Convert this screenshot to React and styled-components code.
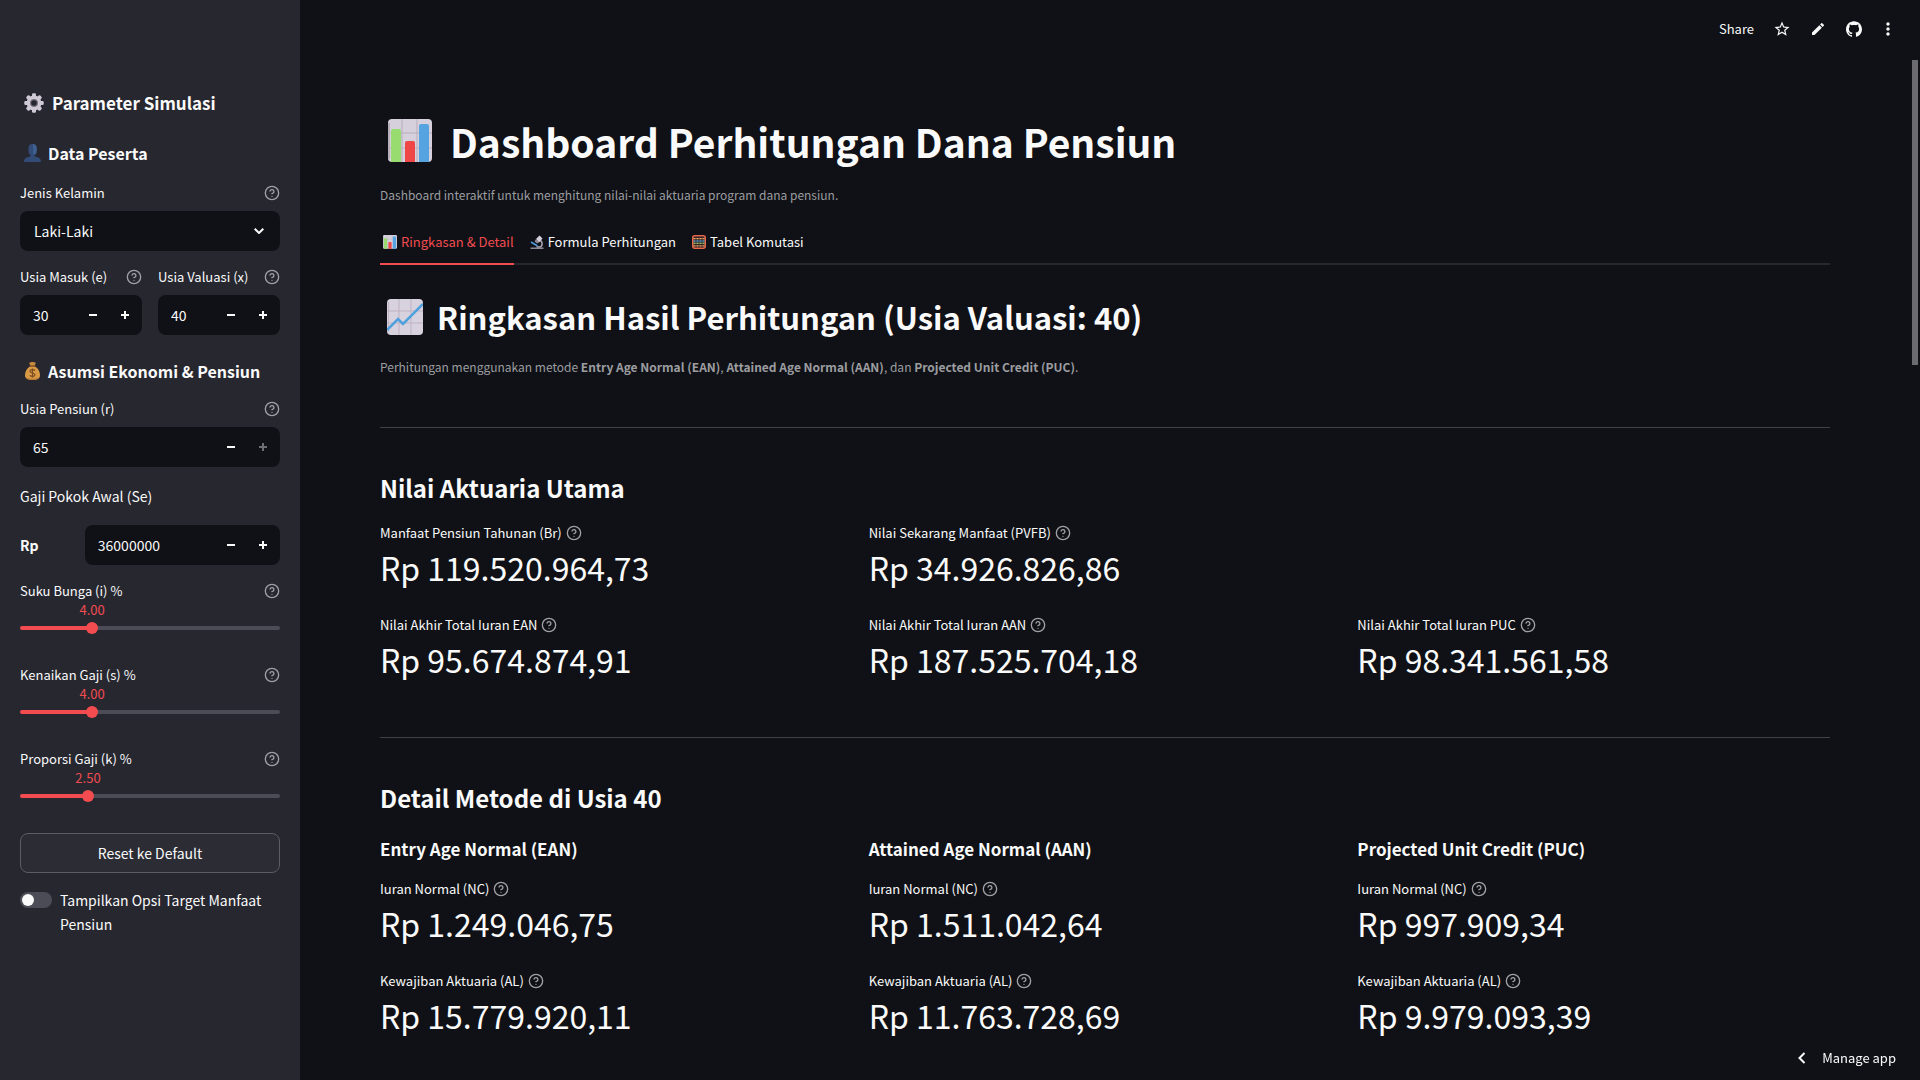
import React, { useState } from 'react';
import styled, { createGlobalStyle } from 'styled-components'
import { MdStarBorder, MdEdit, MdMoreVert } from 'react-icons/md'
import { SiGithub } from 'react-icons/si'

const GlobalStyle = createGlobalStyle`
  * {
    box-sizing: border-box;
  }
  body {
    margin: 0;
    background: #0f1116;
    color: #fafafa;
    font-family: "Noto Sans CJK SC", "Source Sans Pro", sans-serif;
    font-size: 14px;
    line-height: 24px;
  }
  button, input, select {
    font: inherit;
    color: inherit;
  }
  h1, h2, h3, h4, p, dl, dd {
    margin: 0;
  }
`

// ============== Layout
const Page = styled.div`
  display: flex;
  min-height: 100vh;
`
const Sidebar = styled.aside`
  width: 300px;
  flex-shrink: 0;
  padding: 89px 20px 40px;
  background: #272730;
`
const Main = styled.main`
  position: relative;
  flex: 1;
  min-width: 0;
`
const Content = styled.div`
  padding: 55px 90px 20px 80px;
`
const ScrollThumb = styled.div`
  position: absolute;
  top: 60px;
  right: 2px;
  width: 6px;
  height: 305px;
  background: #6c6c70;
`

// ============== Toolbar
const Toolbar = styled.header`
  display: flex;
  justify-content: flex-end;
  align-items: center;
  height: 60px;
  padding: 0 16px 2px 0;
`
const ToolButton = styled.button`
  display: flex;
  align-items: center;
  justify-content: center;
  min-width: ${props => (props.$narrow ? '32px' : '36px')};
  height: 28px;
  padding: 0 ${props => (props.$text ? '10px' : '0')};
  border: none;
  background: none;
  font-size: 13px;
  cursor: pointer;
`

// ============== Headings
const PageTitle = styled.h1`
  display: flex;
  align-items: center;
  gap: 18px;
  padding-left: 8px;
  font-size: 39px;
  font-weight: 700;
  line-height: 52px;
`
const TabTitle = styled.h2`
  display: flex;
  align-items: center;
  gap: 14px;
  margin-top: 30px;
  padding-left: 7px;
  font-size: 31px;
  font-weight: 600;
  line-height: 44px;
`
const SectionTitle = styled.h3`
  font-size: 24px;
  font-weight: 600;
  line-height: 34px;
`
const MethodTitle = styled.h4`
  margin-bottom: 18px;
  font-size: 17px;
  font-weight: 600;
  line-height: 24px;
`
const Caption = styled.p`
  margin-top: 18px;
  color: #9c9da0;
  font-size: 12px;
  line-height: 20px;
`
const SideTitle = styled.h2`
  display: flex;
  align-items: center;
  gap: 8px;
  padding-left: 4px;
  font-size: 17px;
  font-weight: 600;
  line-height: 28px;
`
const SideSubtitle = styled.h3`
  display: flex;
  align-items: center;
  gap: 7px;
  margin-top: 22px;
  padding-left: 4px;
  font-size: 16px;
  font-weight: 600;
  line-height: 28px;
`

// ============== Tabs
const TabList = styled.div`
  display: flex;
  gap: 13px;
  margin-top: 18px;
  border-bottom: 2px solid #272730;
`
const Tab = styled.button`
  display: flex;
  align-items: center;
  gap: 4px;
  margin-bottom: -2px;
  padding: 9px 0 11px 3px;
  border: none;
  border-bottom: 2px solid ${props => (props.$active ? '#f24c50' : 'transparent')};
  background: none;
  color: ${props => (props.$active ? '#f24c50' : '#fafafa')};
  font-size: 13px;
  line-height: 20px;
  cursor: pointer;
`

// ============== Metrics
const Divider = styled.hr`
  height: 1px;
  margin: 50px 0 43px;
  border: none;
  background: #404146;
`
const MetricGrid = styled.dl`
  display: grid;
  grid-template-columns: repeat(3, 1fr);
  gap: 16px;
  margin-top: ${props => (props.$first ? '18px' : '20px')};
`
const MethodGrid = styled.div`
  display: grid;
  grid-template-columns: repeat(3, 1fr);
  gap: 16px;
  margin-top: 22px;
`
const MetricList = styled.dl`
  display: flex;
  flex-direction: column;
  gap: 20px;
`
const MetricLabel = styled.dt`
  display: flex;
  align-items: center;
  gap: 4px;
  font-size: 13px;
  line-height: 20px;
`
const MetricValue = styled.dd`
  padding-bottom: 4px;
  font-size: 32px;
  line-height: 48px;
`

// ============== Form
const Field = styled.div`
  margin-top: ${props => props.$space || '16px'};
`
const FieldHead = styled.div`
  display: flex;
  align-items: center;
  justify-content: space-between;
  height: 20px;
  margin-bottom: ${props => (props.$tight ? '0' : '8px')};
  font-size: 13px;
  line-height: 20px;
`
const FieldPair = styled.div`
  display: grid;
  grid-template-columns: repeat(2, minmax(0, 1fr));
  gap: 16px;
`
const SelectBox = styled.div`
  display: grid;
  align-items: center;
  height: 40px;
  border-radius: 8px;
  background: #0f1116;

  & > * {
    grid-area: 1 / 1;
  }
  svg {
    justify-self: end;
    margin-right: 16px;
    pointer-events: none;
  }
`
const Select = styled.select`
  width: 100%;
  height: 40px;
  padding: 0 14px;
  border: none;
  border-radius: 8px;
  appearance: none;
  background: transparent;

  option {
    background: #0f1116;
  }
`
const NumberBox = styled.div`
  display: flex;
  height: 40px;
  padding-right: 1px;
  border-radius: 8px;
  background: #0f1116;
`
const NumberInput = styled.input`
  flex: 1;
  min-width: 0;
  padding: 0 0 0 13px;
  border: none;
  background: none;
  appearance: textfield;

  &::-webkit-inner-spin-button {
    appearance: none;
  }
`
const StepButton = styled.button`
  display: flex;
  align-items: center;
  justify-content: center;
  flex-shrink: 0;
  width: 32px;
  padding: 0;
  border: none;
  background: none;
  cursor: pointer;

  &:disabled {
    opacity: 0.4;
    cursor: default;
  }
`
const SalaryLabel = styled.label`
  display: block;
  margin-top: 17px;
`
const SalaryRow = styled.div`
  display: grid;
  grid-template-columns: minmax(0, 1fr) minmax(0, 4fr);
  align-items: center;
  gap: 16px;
  margin-top: 17px;
`
const SliderField = styled.div`
  height: 84px;
`
const SliderValue = styled.div`
  display: flex;
  height: 18px;
  color: #f24c50;
  font-size: 13px;
  line-height: 18px;

  output {
    transform: translateX(-50%);
  }
`
const Range = styled.input`
  display: block;
  width: 100%;
  height: 18px;
  margin: 0;
  appearance: none;
  background: none;

  &::-webkit-slider-runnable-track {
    height: 4px;
    border-radius: 4px;
    background: linear-gradient(to right, #f24c50 var(--filled), #4c4c56 var(--filled));
  }
  &::-webkit-slider-thumb {
    appearance: none;
    width: 12px;
    height: 12px;
    margin-top: -4px;
    border-radius: 50%;
    background: #f24c50;
  }
`
const ResetButton = styled.button`
  display: block;
  width: 100%;
  height: 40px;
  border: 1px solid #5c5c63;
  border-radius: 8px;
  background: #2c2c35;
  cursor: pointer;
`
const ToggleLabel = styled.label`
  display: flex;
  gap: 8px;
  margin-top: 15px;
`
const Toggle = styled.input`
  flex-shrink: 0;
  display: flex;
  align-items: center;
  width: 32px;
  height: 16px;
  margin: 4px 0;
  padding: 2px;
  border-radius: 8px;
  appearance: none;
  background: #4c4c56;

  &::before {
    content: "";
    width: 12px;
    height: 12px;
    border-radius: 50%;
    background: #fafafa;
  }
  &:checked {
    justify-content: flex-end;
    background: #f24c50;
  }
`

// ============== Manage app
const ManageApp = styled.button`
  position: fixed;
  right: 24px;
  bottom: 10px;
  display: flex;
  align-items: center;
  gap: 16px;
  padding: 0;
  border: none;
  background: none;
  font-size: 13px;
  cursor: pointer;
`

// ============== Icons
const HelpButton = styled.button`
  display: flex;
  padding: 0;
  border: none;
  background: none;
  color: #a0a0a6;
  cursor: help;
`
const Glyph = styled.svg`
  display: block;
  flex-shrink: 0;
`

function Help({ about }) {
  return (
    <HelpButton type="button" aria-label={about}>
      <Glyph width="16" height="16" viewBox="0 0 24 24" fill="none" stroke="currentColor" strokeWidth="2" strokeLinecap="round" strokeLinejoin="round">
        <circle cx="12" cy="12" r="10" />
        <path d="M9.09 9a3 3 0 0 1 5.83 1c0 2-3 3-3 3M12 17h.01" />
      </Glyph>
    </HelpButton>
  )
}

function BarChartIcon({ size }) {
  return (
    <Glyph width={size} height={size} viewBox="0 0 44 44">
      <rect width="44" height="43" rx="4" fill="#d6cfdc" />
      <path d="M0 14h44M0 29h44M14 0v43M29 0v43" stroke="#b9adbd" strokeWidth="1" />
      <path d="M1 4v36" stroke="#b9b0be" strokeWidth="2" />
      <path d="M3 43V12a2 2 0 0 1 2-2h6a2 2 0 0 1 2 2v31z" fill="#98dc70" />
      <path d="M17 43V24a2 2 0 0 1 2-2h6a2 2 0 0 1 2 2v19z" fill="#ef4748" />
      <path d="M31 43V7a2 2 0 0 1 2-2h6a2 2 0 0 1 2 2v36z" fill="#55a3e0" />
    </Glyph>
  )
}

function LineChartIcon() {
  return (
    <Glyph width="36" height="36" viewBox="0 0 36 36">
      <rect width="36" height="36" rx="4" fill="#d8d2df" />
      <path d="M0 12h36M0 24h36M12 0v36M24 0v36M1.500 3v30" stroke="#bfb2c3" strokeWidth="1" />
      <path d="M0 31L11 20l5 5L36 5" fill="none" stroke="#4ea1dd" strokeWidth="2.500" />
    </Glyph>
  )
}

function MicroscopeIcon() {
  return (
    <Glyph width="14" height="14" viewBox="0 0 28 28">
      <path d="M19 10c7 3 7 12 0 15" fill="none" stroke="#aaa4b2" strokeWidth="3" />
      <path d="M12 8l7-7 6 6-7 8z" fill="#d5d0dc" />
      <path d="M12 8l-3 5 5 4 4-2z" fill="#8d8796" />
      <path d="M2 14l13 8" stroke="#4c9cdf" strokeWidth="3" />
      <path d="M1 25h26v3H1zM13 22h8v3h-8z" fill="#8d8796" />
    </Glyph>
  )
}

function AbacusIcon() {
  return (
    <Glyph width="14" height="14" viewBox="0 0 28 28">
      <rect x="1.500" y="1.500" width="25" height="25" rx="4" fill="#33242a" stroke="#e8684a" strokeWidth="3" />
      <path d="M3 7h22M3 21.500h22" stroke="#f0a85c" strokeWidth="2.500" />
      <path d="M3 12h22" stroke="#58a8df" strokeWidth="2.500" />
      <path d="M3 16.500h22" stroke="#98d070" strokeWidth="2.500" />
      <path d="M8 3v22M14 3v22M20 3v22" stroke="#33242a" strokeWidth="1.500" />
    </Glyph>
  )
}

function GearIcon() {
  return (
    <Glyph width="20" height="20" viewBox="0 0 20 20">
      <g fill="#cfc9d6">
        {[0, 45, 90, 135].map(angle => (
          <rect key={angle} x="8" y="0.300" width="4" height="19.400" rx="1.200" transform={`rotate(${angle} 10 10)`} />
        ))}
        <circle cx="10" cy="10" r="7.400" />
      </g>
      <circle cx="10" cy="10" r="4" fill="#77707f" />
      <circle cx="10" cy="10" r="2.800" fill="#272730" />
    </Glyph>
  )
}

function PersonIcon() {
  return (
    <Glyph width="17" height="18" viewBox="0 0 17 18">
      <path d="M4.500 4c0-2.600 1.500-4 4-4s4.200 1.400 4.200 4v3c0 2-1.200 3.600-2.400 4.200v1l4 1.300c1.700.6 2.700 2.200 2.700 4.500H0c0-2.300 1-3.900 2.700-4.500l3.800-1.300v-1C5.300 10.600 4.500 9 4.500 7z" fill="#324c77" />
      <path d="M9 0c2.500.2 3.700 1.600 3.700 4v3c0 2-1.200 3.600-2.400 4.200L9 9z" fill="#3e6090" />
    </Glyph>
  )
}

function MoneyBagIcon() {
  return (
    <Glyph width="17" height="18" viewBox="0 0 17 18">
      <path d="M5 .5c1 .6 1.600-.5 3.500-.5s2.500 1 3.500.5L10.500 4h-4z" fill="#c88a3c" />
      <path d="M6 4.500h5c3 1.800 5 5 5 8.500s-2 5-7.500 5S1 16.500 1 13s2-6.700 5-8.500z" fill="#d99a45" />
      <path d="M2 15c2 2 11 2 13 0-.8 2-3 3-6.500 3S2.800 17 2 15z" fill="#b87932" />
      <rect x="5.500" y="3.300" width="6" height="1.500" rx=".7" fill="#8f5b2a" />
      <path d="M11 8.500C9.500 7 6 7.300 6 9.300s5 1.400 5 3.400-3.800 2.300-5.200.7M8.500 6.500v9" fill="none" stroke="#7a4a22" strokeWidth="1.200" />
    </Glyph>
  )
}

function StepIcon({ plus }) {
  return (
    <Glyph width="8" height="8" viewBox="0 0 8 8" fill="currentColor">
      <path d={plus ? 'M3 0h2v3h3v2H5v3H3V5H0V3h3z' : 'M0 3h8v2H0z'} />
    </Glyph>
  )
}

// ============== Components
function NumberField({ id, value, atMax }) {
  const [current, setCurrent] = useState(value)
  return (
    <NumberBox>
      <NumberInput id={id} type="number" value={current} onChange={e => setCurrent(Number(e.target.value))} />
      <StepButton type="button" aria-label="Kurangi" onClick={() => setCurrent(current - 1)}><StepIcon /></StepButton>
      <StepButton type="button" aria-label="Tambah" disabled={atMax} onClick={() => setCurrent(current + 1)}><StepIcon plus /></StepButton>
    </NumberBox>
  )
}

function Slider({ id, label, start, max }) {
  const [value, setValue] = useState(start)
  const ratio = value / max
  const center = `calc(6px + (100% - 12px) * ${ratio})`
  return (
    <SliderField>
      <FieldHead $tight>
        <label htmlFor={id}>{label}</label>
        <Help about={label} />
      </FieldHead>
      <SliderValue style={{ paddingLeft: center }}>
        <output htmlFor={id}>{value.toFixed(2)}</output>
      </SliderValue>
      <Range id={id} type="range" min="0" max={max} step="0.01" value={value}
        style={{ '--filled': center }}
        onChange={e => setValue(Number(e.target.value))} />
    </SliderField>
  )
}

function Metric({ label, value }) {
  return (
    <div>
      <MetricLabel>{label}<Help about={label} /></MetricLabel>
      <MetricValue>{value}</MetricValue>
    </div>
  )
}

const iuran = [
  ['Nilai Akhir Total Iuran EAN', 'Rp 95.674.874,91'],
  ['Nilai Akhir Total Iuran AAN', 'Rp 187.525.704,18'],
  ['Nilai Akhir Total Iuran PUC', 'Rp 98.341.561,58'],
]

const metode = [
  { nama: 'Entry Age Normal (EAN)', nc: 'Rp 1.249.046,75', al: 'Rp 15.779.920,11' },
  { nama: 'Attained Age Normal (AAN)', nc: 'Rp 1.511.042,64', al: 'Rp 11.763.728,69' },
  { nama: 'Projected Unit Credit (PUC)', nc: 'Rp 997.909,34', al: 'Rp 9.979.093,39' },
]

function Parameters() {
  return (
    <Sidebar>
      <SideTitle><GearIcon />Parameter Simulasi</SideTitle>
      <SideSubtitle><PersonIcon />Data Peserta</SideSubtitle>

      <Field>
        <FieldHead>
          <label htmlFor="kelamin">Jenis Kelamin</label>
          <Help about="Jenis Kelamin" />
        </FieldHead>
        <SelectBox>
          <Select id="kelamin" defaultValue="Laki-Laki">
            <option>Laki-Laki</option>
            <option>Perempuan</option>
          </Select>
          <Glyph width="10" height="6" viewBox="0 0 10 6" fill="none" stroke="#fafafa" strokeWidth="2">
            <path d="M.7.7L5 5 9.300.7" />
          </Glyph>
        </SelectBox>
      </Field>

      <FieldPair>
        <Field>
          <FieldHead>
            <label htmlFor="masuk">Usia Masuk (e)</label>
            <Help about="Usia Masuk" />
          </FieldHead>
          <NumberField id="masuk" value={30} />
        </Field>
        <Field>
          <FieldHead>
            <label htmlFor="valuasi">Usia Valuasi (x)</label>
            <Help about="Usia Valuasi" />
          </FieldHead>
          <NumberField id="valuasi" value={40} />
        </Field>
      </FieldPair>

      <SideSubtitle><MoneyBagIcon />Asumsi Ekonomi &amp; Pensiun</SideSubtitle>
      <Field $space="14px">
        <FieldHead>
          <label htmlFor="pensiun">Usia Pensiun (r)</label>
          <Help about="Usia Pensiun" />
        </FieldHead>
        <NumberField id="pensiun" value={65} atMax />
      </Field>

      <SalaryLabel htmlFor="gaji">Gaji Pokok Awal (Se)</SalaryLabel>
      <SalaryRow>
        <strong>Rp</strong>
        <NumberField id="gaji" value={36000000} />
      </SalaryRow>

      <Field>
        <Slider id="bunga" label="Suku Bunga (i) %" start={4} max={15} />
        <Slider id="kenaikan" label="Kenaikan Gaji (s) %" start={4} max={15} />
        <Slider id="proporsi" label="Proporsi Gaji (k) %" start={2.5} max={10} />
      </Field>

      <ResetButton type="button">Reset ke Default</ResetButton>
      <ToggleLabel>
        <Toggle type="checkbox" role="switch" />
        Tampilkan Opsi Target Manfaat Pensiun
      </ToggleLabel>
    </Sidebar>
  )
}

function App() {
  return (
    <Page>
      <GlobalStyle />
      <Parameters />
      <Main>
        <Toolbar>
          <ToolButton $text>Share</ToolButton>
          <ToolButton aria-label="Favorit"><MdStarBorder size={18} /></ToolButton>
          <ToolButton aria-label="Edit"><MdEdit size={16} /></ToolButton>
          <ToolButton aria-label="GitHub"><SiGithub size={16} /></ToolButton>
          <ToolButton $narrow aria-label="Menu"><MdMoreVert size={20} /></ToolButton>
        </Toolbar>

        <Content>
          <PageTitle><BarChartIcon size={44} />Dashboard Perhitungan Dana Pensiun</PageTitle>
          <Caption>Dashboard interaktif untuk menghitung nilai-nilai aktuaria program dana pensiun.</Caption>

          <TabList role="tablist">
            <Tab role="tab" aria-selected="true" $active><BarChartIcon size={14} />Ringkasan &amp; Detail</Tab>
            <Tab role="tab" aria-selected="false"><MicroscopeIcon />Formula Perhitungan</Tab>
            <Tab role="tab" aria-selected="false"><AbacusIcon />Tabel Komutasi</Tab>
          </TabList>

          <TabTitle><LineChartIcon />Ringkasan Hasil Perhitungan (Usia Valuasi: 40)</TabTitle>
          <Caption>
            Perhitungan menggunakan metode <strong>Entry Age Normal (EAN)</strong>, <strong>Attained Age Normal (AAN)</strong>, dan <strong>Projected Unit Credit (PUC)</strong>.
          </Caption>

          <Divider />

          <SectionTitle>Nilai Aktuaria Utama</SectionTitle>
          <MetricGrid $first>
            <Metric label="Manfaat Pensiun Tahunan (Br)" value="Rp 119.520.964,73" />
            <Metric label="Nilai Sekarang Manfaat (PVFB)" value="Rp 34.926.826,86" />
          </MetricGrid>
          <MetricGrid>
            {iuran.map(([label, value]) => <Metric key={label} label={label} value={value} />)}
          </MetricGrid>

          <Divider />

          <SectionTitle>Detail Metode di Usia 40</SectionTitle>
          <MethodGrid>
            {metode.map(m => (
              <section key={m.nama}>
                <MethodTitle>{m.nama}</MethodTitle>
                <MetricList>
                  <Metric label="Iuran Normal (NC)" value={m.nc} />
                  <Metric label="Kewajiban Aktuaria (AL)" value={m.al} />
                </MetricList>
              </section>
            ))}
          </MethodGrid>
        </Content>
        <ScrollThumb />
      </Main>
      <ManageApp type="button">
        <Glyph width="8" height="12" viewBox="0 0 8 12" fill="none" stroke="#fafafa" strokeWidth="2">
          <path d="M6.500 1L1.500 6l5 5" />
        </Glyph>
        Manage app
      </ManageApp>
    </Page>
  );
}

export default App;
